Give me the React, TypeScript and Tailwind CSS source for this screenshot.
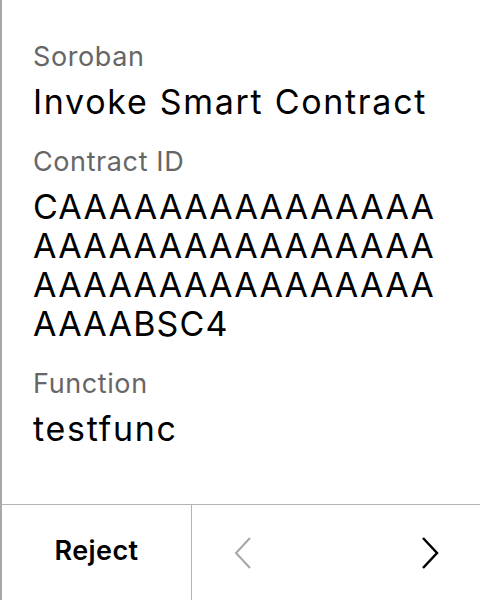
const Field = ({
  label,
  value,
  tight = false,
}: {
  label: string;
  value: string;
  tight?: boolean;
}) => (
  <div className="flex flex-col">
    <span className="text-[27px] leading-[32px] tracking-[0.6px] text-[#666666]">
      {label}
    </span>
    <span
      className={
        tight
          ? "text-[34px] leading-[39px] tracking-[1.2px] text-black break-all mt-[9px]"
          : "text-[34px] leading-[39px] tracking-[1.7px] text-black break-all mt-[9px]"
      }
    >
      {value}
    </span>
  </div>
);

const Chevron = ({ dir, color }: { dir: "left" | "right"; color: string }) => (
  <svg width="18" height="32" viewBox="0 0 18 32" fill="none">
    <path
      d={dir === "left" ? "M16 1 L2 16 L16 31" : "M2 1 L16 16 L2 31"}
      stroke={color}
      strokeWidth={dir === "left" ? 2 : 2.5}
    />
  </svg>
);

export default function App() {
  return (
    <div
      className="w-[480px] h-[600px] flex flex-col bg-white border-l-2 border-[#a9a9a9]"
      style={{ fontFamily: "Inter, 'Noto Sans', sans-serif" }}
    >
      <div className="flex-1 flex flex-col gap-[25px] px-[31px] pt-[41px]">
        <Field label="Soroban" value="Invoke Smart Contract" />
        <Field
          label="Contract ID"
          value="CAAAAAAAAAAAAAAAAAAAAAAAAAAAAAAAAAAAAAAAAAAAAAAAAAAABSC4"
          tight
        />
        <Field label="Function" value="testfunc" />
      </div>
      <div className="h-[96px] flex border-t border-[#b3b3b3]">
        <div className="w-[190px] flex items-center justify-center border-r border-[#b3b3b3] pb-[2px]">
          <span className="text-[27px] font-semibold tracking-[0.4px] text-black">
            Reject
          </span>
        </div>
        <div className="flex-1 flex items-center justify-between pl-[42px] pr-[41px]">
          <Chevron dir="left" color="#a6a6a6" />
          <Chevron dir="right" color="#000000" />
        </div>
      </div>
    </div>
  );
}
